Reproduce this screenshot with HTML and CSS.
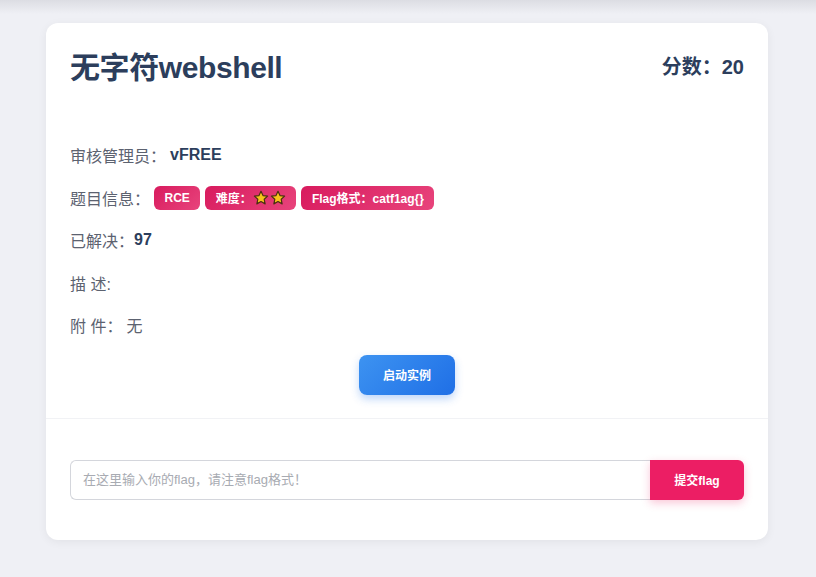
FILE: index.html
```html
<html>
<head>
<title>无字符webshell</title>
<link rel="stylesheet" href="styles.css">
</head>
<body>
<div class="card">
    <div class="card-head">
        <h1 class="title">无字符webshell</h1>
        <div class="score">分数：20</div>
    </div>

    <div class="info">
        <div class="row"><span class="label">审核管理员：</span><span class="value">vFREE</span></div>
        <div class="row">
            <span class="label">题目信息：</span>
            <span class="tag">RCE</span>
            <span class="tag">难度：
                <svg class="star" viewBox="0 0 24 24"><path d="M12 2l3 6.4 6.9.8-5.1 4.7 1.4 6.9L12 17.3l-6.2 3.5 1.4-6.9-5.1-4.7 6.9-.8z"/></svg>
                <svg class="star" viewBox="0 0 24 24"><path d="M12 2l3 6.4 6.9.8-5.1 4.7 1.4 6.9L12 17.3l-6.2 3.5 1.4-6.9-5.1-4.7 6.9-.8z"/></svg>
            </span>
            <span class="tag">Flag格式：catf1ag{}</span>
        </div>
        <div class="row"><span class="label tight">已解决：</span><span class="value">97</span></div>
        <div class="row"><span class="label">描 述:</span></div>
        <div class="row"><span class="label">附 件：</span><span class="plain">无</span></div>
    </div>

    <div class="launch">
        <button class="btn-launch">启动实例</button>
    </div>

    <div class="card-foot">
        <form class="flag-form">
            <input type="text" placeholder="在这里输入你的flag，请注意flag格式！">
            <button type="submit">提交flag</button>
        </form>
    </div>
</div>
</body>
</html>
```

FILE: styles.css
```css
body {
    margin: 0;
    padding: 23px 0 0 46px;
    background: linear-gradient(to bottom, #dcdde3 0px, #eff0f5 14px) #eff0f5;
    font-family: "Liberation Sans", "Noto Sans CJK SC", sans-serif;
    height: 577px;
    box-sizing: border-box;
}

.card {
    width: 722px;
    height: 517px;
    background: #fff;
    border-radius: 12px;
    box-shadow: 0 2px 10px rgba(0, 0, 0, 0.06);
    box-sizing: border-box;
}

.card-head {
    display: flex;
    justify-content: space-between;
    align-items: center;
    padding: 25px 24px 0 24px;
    height: 40px;
}

.title {
    margin: 0;
    font-size: 30px;
    line-height: 40px;
    font-weight: bold;
    color: #2c3e5c;
    letter-spacing: -0.4px;
}

.score {
    font-size: 20px;
    font-weight: bold;
    color: #2c3e5c;
    margin-bottom: 5px;
}

.info {
    padding: 46px 24px 0 24px;
}

.row {
    height: 42.5px;
    display: flex;
    align-items: center;
    font-size: 16px;
}

.label {
    color: #5c6270;
    margin-right: 4px;
}

.tight {
    margin-right: 0;
}

.value {
    font-weight: bold;
    color: #2c3e5c;
}

.plain {
    color: #5c6270;
}

.tag {
    display: inline-flex;
    align-items: center;
    height: 24px;
    padding: 0 10.5px;
    margin-right: 5px;
    border-radius: 6px;
    background: linear-gradient(135deg, #d81b5e, #e8447c);
    color: #fff;
    font-size: 12px;
    font-weight: bold;
}

.star {
    width: 16px;
    height: 16px;
    margin-left: 1px;
    fill: #f7c21b;
    stroke: #4a3010;
    stroke-width: 1.8;
    stroke-linejoin: round;
}

.launch {
    display: flex;
    justify-content: center;
    padding-top: 8px;
    padding-bottom: 23px;
    border-bottom: 1px solid #f1f2f5;
}

.btn-launch {
    width: 96px;
    height: 40px;
    border: none;
    border-radius: 8px;
    background: linear-gradient(135deg, #3d93f1, #1f6fe6);
    color: #fff;
    font-size: 12px;
    font-weight: bold;
    font-family: inherit;
    box-shadow: 0 4px 8px rgba(40, 120, 235, 0.3);
    cursor: pointer;
}

.card-foot {
    padding: 41px 24px 0 24px;
}

.flag-form {
    display: flex;
    margin: 0;
}

.flag-form input {
    flex: 1;
    height: 40px;
    box-sizing: border-box;
    border: 1px solid #d4d6dc;
    border-right: none;
    border-radius: 6px 0 0 6px;
    padding: 0 12px;
    font-size: 13px;
    font-family: inherit;
    color: #333;
}

.flag-form input::placeholder {
    color: #a8abb2;
}

.flag-form button {
    width: 94px;
    height: 40px;
    border: none;
    border-radius: 0 6px 6px 0;
    background: #ec1e64;
    color: #fff;
    font-size: 12px;
    font-weight: bold;
    font-family: inherit;
    box-shadow: 0 3px 8px rgba(236, 30, 100, 0.25);
    cursor: pointer;
}
```
